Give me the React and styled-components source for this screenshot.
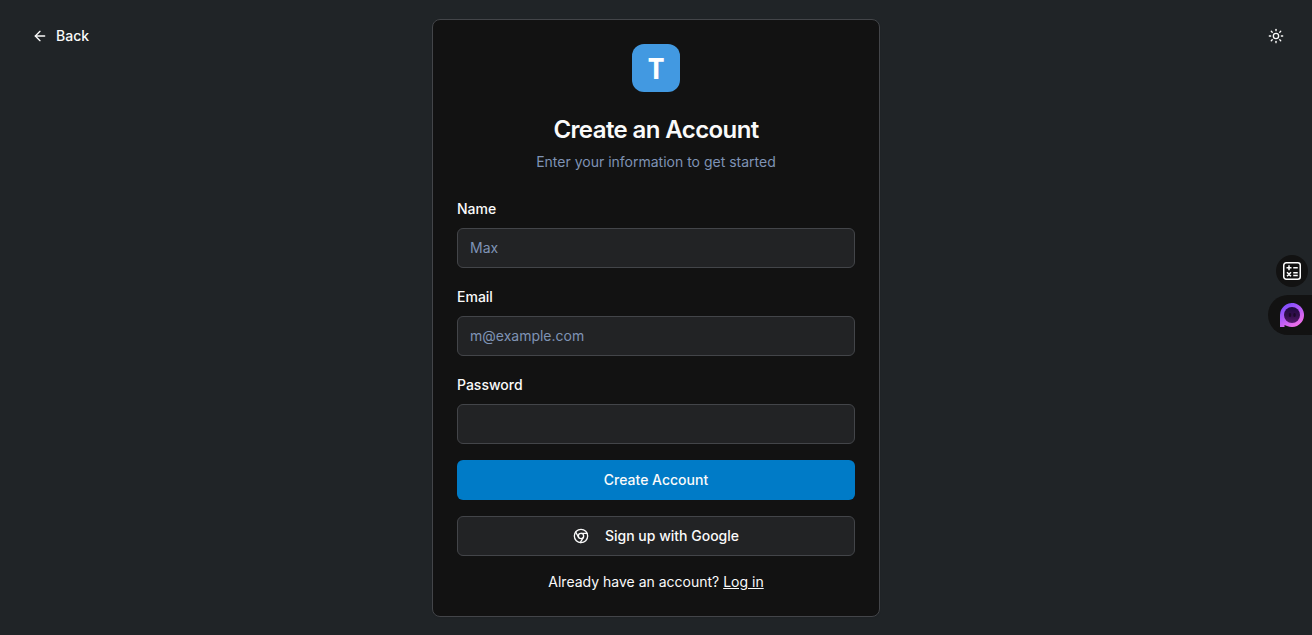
import React, { useState } from "react";
import styled, { createGlobalStyle } from "styled-components";
import { ArrowLeft, Chrome, Sun } from "lucide-react";

const GlobalStyle = createGlobalStyle`
  *, *::before, *::after {
    box-sizing: border-box;
  }

  body {
    margin: 0;
    background-color: #202427;
    color: #fafafa;
    font-family: Inter, "Liberation Sans", sans-serif;
    font-size: 14px;
    line-height: 20px;
  }

  button, input {
    font: inherit;
    color: inherit;
  }
`;

const Page = styled.div`
  display: grid;
  grid-template-columns: 1fr minmax(0, 448px) 1fr;
  align-items: center;
  min-height: 100vh;
  padding: 16px;
`;

const Corner = styled.div`
  align-self: start;
  justify-self: ${({ $side }) => $side};
`;

const GhostButton = styled.button`
  display: inline-flex;
  align-items: center;
  justify-content: center;
  gap: 8px;
  height: 40px;
  padding: 0 ${({ $icon }) => ($icon ? "12px" : "16px")};
  border: 0;
  border-radius: 6px;
  background: transparent;
  font-weight: 500;
  cursor: pointer;
`;

const Card = styled.main`
  padding: 24px;
  border: 1px solid #434549;
  border-radius: 8px;
  background-color: #121212;
  box-shadow: 0 1px 2px rgba(0, 0, 0, 0.05);
`;

const CardHeader = styled.header`
  display: flex;
  flex-direction: column;
  align-items: center;
  margin-bottom: 24px;
  text-align: center;
`;

const Logo = styled.div`
  display: flex;
  align-items: center;
  justify-content: center;
  width: 48px;
  height: 48px;
  margin-bottom: 22px;
  border-radius: 12px;
  background-color: #4299e1;
  color: #fff;
  font-family: "Open Sans", "Liberation Sans", sans-serif;
  font-size: 28px;
  font-weight: 700;
`;

const Title = styled.h1`
  margin: 0 0 6px;
  font-size: 24px;
  line-height: 32px;
  font-weight: 600;
  letter-spacing: -0.025em;
`;

const Description = styled.p`
  margin: 0;
  color: #7f93b5;
`;

const Form = styled.form`
  display: flex;
  flex-direction: column;
  gap: 16px;
`;

const Field = styled.div`
  display: flex;
  flex-direction: column;
  gap: 8px;
`;

const Label = styled.label`
  padding-top: 2px;
  line-height: 22px;
  font-weight: 500;
`;

const Input = styled.input`
  width: 100%;
  height: 40px;
  padding: 8px 12px;
  border: 1px solid #434549;
  border-radius: 6px;
  background-color: #222325;

  &::placeholder {
    color: #7f93b5;
    opacity: 1;
  }
`;

const Button = styled.button`
  display: flex;
  align-items: center;
  justify-content: center;
  gap: 16px;
  height: 40px;
  padding: 0 16px;
  border: ${({ $outline }) => ($outline ? "1px solid #434549" : "0")};
  border-radius: 6px;
  background-color: ${({ $outline }) => ($outline ? "#222325" : "#007bc7")};
  font-weight: 500;
  cursor: pointer;
`;

const Footer = styled.p`
  margin: 16px 0 0;
  text-align: center;
`;

const LoginLink = styled.a`
  color: inherit;
  text-decoration: underline;
`;

/* floating shortcuts stuck to the right edge of the window */
const Dock = styled.aside`
  position: fixed;
  top: 255px;
  right: 0;
  display: flex;
  flex-direction: column;
  align-items: flex-end;
  gap: 8px;
`;

const CalcButton = styled.button`
  display: flex;
  align-items: center;
  justify-content: center;
  width: 32px;
  height: 32px;
  margin-right: 4px;
  padding: 0;
  border: 0;
  border-radius: 50%;
  background-color: #121212;
  cursor: pointer;
`;

const ChatButton = styled.button`
  display: flex;
  align-items: center;
  width: 44px;
  height: 40px;
  padding: 0 0 0 12px;
  border: 0;
  border-radius: 20px 0 0 20px;
  background-color: #121212;
  cursor: pointer;
`;

const CalcIcon = () => (
    <svg width="20" height="20" viewBox="0 0 20 20" fill="none" stroke="#fff" strokeWidth="1.5" aria-hidden="true">
        <rect x="1.75" y="1.75" width="16.500" height="16.500" rx="2.500" />
        <path d="M4.500 6.750h5M7 4.250v5M11.250 6.750h4.500M11.250 11.750h4.500M11.250 14.500h4.500M5 11.250l4 4M9 11.250l-4 4" />
    </svg>
);

const ChatIcon = () => (
    <svg width="24" height="24" viewBox="0 0 24 24" aria-hidden="true">
        <defs>
            <linearGradient id="ring" x1="4" y1="2" x2="18" y2="23" gradientUnits="userSpaceOnUse">
                <stop offset="0" stopColor="#7c4dff" />
                <stop offset="0.5" stopColor="#b95cf5" />
                <stop offset="1" stopColor="#f471e8" />
            </linearGradient>
            <linearGradient id="face" x1="12" y1="4" x2="12" y2="20" gradientUnits="userSpaceOnUse">
                <stop offset="0" stopColor="#1f0a42" />
                <stop offset="0.6" stopColor="#35104e" />
                <stop offset="1" stopColor="#56196c" />
            </linearGradient>
        </defs>
        <path d="M0 24V12a12 12 0 1 1 7 10.9L4.500 22V24z" fill="url(#ring)" />
        <circle cx="12" cy="12" r="8" fill="url(#face)" />
        <ellipse cx="10" cy="12" rx="1.250" ry="2" fill="#1b0829" />
        <ellipse cx="14.500" cy="12" rx="1.250" ry="2" fill="#1b0829" />
    </svg>
);

const fields = [
    { id: "name", label: "Name", type: "text", placeholder: "Max" },
    { id: "email", label: "Email", type: "email", placeholder: "m@example.com" },
    { id: "password", label: "Password", type: "password" },
];

const App = () => {
    const [values, setValues] = useState({ name: "", email: "", password: "" });

    const handleChange = (e) => {
        setValues({ ...values, [e.target.id]: e.target.value });
    };

    return (
        <>
            <GlobalStyle />
            <Page>
                <Corner $side="start">
                    <GhostButton type="button">
                        <ArrowLeft size={16} />
                        Back
                    </GhostButton>
                </Corner>

                <Card>
                    <CardHeader>
                        <Logo>T</Logo>
                        <Title>Create an Account</Title>
                        <Description>Enter your information to get started</Description>
                    </CardHeader>

                    <Form onSubmit={(e) => e.preventDefault()}>
                        {fields.map((field) => (
                            <Field key={field.id}>
                                <Label htmlFor={field.id}>{field.label}</Label>
                                <Input
                                    id={field.id}
                                    type={field.type}
                                    placeholder={field.placeholder}
                                    value={values[field.id]}
                                    onChange={handleChange}
                                />
                            </Field>
                        ))}
                        <Button type="submit">Create Account</Button>
                        <Button type="button" $outline>
                            <Chrome size={16} />
                            Sign up with Google
                        </Button>
                    </Form>

                    <Footer>
                        Already have an account? <LoginLink href="#login">Log in</LoginLink>
                    </Footer>
                </Card>

                <Corner $side="end">
                    <GhostButton type="button" $icon aria-label="Toggle theme">
                        <Sun size={16} />
                    </GhostButton>
                </Corner>
            </Page>

            <Dock>
                <CalcButton type="button" aria-label="Calculator">
                    <CalcIcon />
                </CalcButton>
                <ChatButton type="button" aria-label="Open chat">
                    <ChatIcon />
                </ChatButton>
            </Dock>
        </>
    );
};

export default App;
